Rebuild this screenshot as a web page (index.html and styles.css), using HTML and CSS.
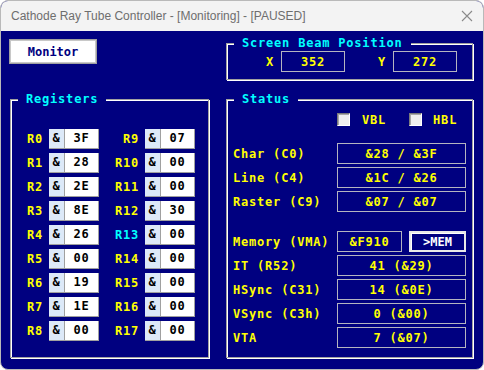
FILE: index.html
```html
<!DOCTYPE html>
<html lang="en">
<head>
    <meta charset="UTF-8">
    <title>Cathode Ray Tube Controller</title>
    <link rel="stylesheet" href="styles.css">
</head>
<body>
    <div class="window">
        <div class="titlebar">
            <span class="title">Cathode Ray Tube Controller - [Monitoring] - [PAUSED]</span>
            <svg class="close" width="12" height="12" viewBox="0 0 12 12">
                <path d="M1 1 L11 11 M11 1 L1 11" stroke="#8a8a8a" stroke-width="1.1" fill="none"/>
            </svg>
        </div>

        <div class="client">
            <button class="monitor">Monitor</button>

            <fieldset class="group beam">
                <legend>Screen Beam Position</legend>
                <div class="beam-row">
                    <span class="lbl">X</span>
                    <div class="box beam-box">352</div>
                    <span class="lbl y">Y</span>
                    <div class="box beam-box">272</div>
                </div>
            </fieldset>

            <fieldset class="group registers">
                <legend>Registers</legend>
                <div class="reg-grid">
                    <span class="reg">R0</span><span class="amp">&amp;</span><span class="val">3F</span>
                    <span class="reg">R9</span><span class="amp">&amp;</span><span class="val">07</span>
                    <span class="reg">R1</span><span class="amp">&amp;</span><span class="val">28</span>
                    <span class="reg">R10</span><span class="amp">&amp;</span><span class="val">00</span>
                    <span class="reg">R2</span><span class="amp">&amp;</span><span class="val">2E</span>
                    <span class="reg">R11</span><span class="amp">&amp;</span><span class="val">00</span>
                    <span class="reg">R3</span><span class="amp">&amp;</span><span class="val">8E</span>
                    <span class="reg">R12</span><span class="amp">&amp;</span><span class="val">30</span>
                    <span class="reg">R4</span><span class="amp">&amp;</span><span class="val">26</span>
                    <span class="reg hot">R13</span><span class="amp">&amp;</span><span class="val">00</span>
                    <span class="reg">R5</span><span class="amp">&amp;</span><span class="val">00</span>
                    <span class="reg">R14</span><span class="amp">&amp;</span><span class="val">00</span>
                    <span class="reg">R6</span><span class="amp">&amp;</span><span class="val">19</span>
                    <span class="reg">R15</span><span class="amp">&amp;</span><span class="val">00</span>
                    <span class="reg">R7</span><span class="amp">&amp;</span><span class="val">1E</span>
                    <span class="reg">R16</span><span class="amp">&amp;</span><span class="val">00</span>
                    <span class="reg">R8</span><span class="amp">&amp;</span><span class="val">00</span>
                    <span class="reg">R17</span><span class="amp">&amp;</span><span class="val">00</span>
                </div>
            </fieldset>

            <fieldset class="group status">
                <legend>Status</legend>
                <div class="checks">
                    <span class="check"></span><span class="lbl">VBL</span>
                    <span class="check hbl"></span><span class="lbl">HBL</span>
                </div>
                <div class="rows">
                    <div class="row"><span class="lbl">Char (C0)</span><div class="box wide">&amp;28 / &amp;3F</div></div>
                    <div class="row"><span class="lbl">Line (C4)</span><div class="box wide">&amp;1C / &amp;26</div></div>
                    <div class="row"><span class="lbl">Raster (C9)</span><div class="box wide">&amp;07 / &amp;07</div></div>
                    <div class="row mem">
                        <span class="lbl">Memory (VMA)</span>
                        <div class="box short">&amp;F910</div>
                        <button class="mem-btn">&gt;MEM</button>
                    </div>
                    <div class="row"><span class="lbl">IT (R52)</span><div class="box wide">41 (&amp;29)</div></div>
                    <div class="row"><span class="lbl">HSync (C31)</span><div class="box wide">14 (&amp;0E)</div></div>
                    <div class="row"><span class="lbl">VSync (C3h)</span><div class="box wide">0 (&amp;00)</div></div>
                    <div class="row"><span class="lbl">VTA</span><div class="box wide">7 (&amp;07)</div></div>
                </div>
            </fieldset>
        </div>
    </div>
</body>
</html>
```

FILE: styles.css
```css
body {
    margin: 0;
    background: #ffffff;
}

.window {
    width: 484px;
    height: 370px;
    box-sizing: border-box;
    border: 1px solid #b9b9b9;
    border-radius: 8px;
    overflow: hidden;
    background: #000080;
}

.titlebar {
    height: 30px;
    background: #f3f3f3;
    display: flex;
    align-items: center;
    justify-content: space-between;
    padding: 0 10px 0 10px;
}
.title {
    font-family: "Liberation Sans", Arial, sans-serif;
    font-size: 12px;
    color: #6e6e6e;
}
.close {
    display: block;
}

.client {
    display: grid;
    grid-template-columns: 201px 248px;
    grid-template-rows: 44px 266px;
    column-gap: 16px;
    row-gap: 12px;
    padding: 5px 0 0 8px;
    font-family: "DejaVu Sans Mono", "Liberation Mono", monospace;
    font-weight: bold;
    font-size: 12px;
    letter-spacing: 0.8px;
    color: #ffff00;
}

.monitor {
    margin-top: 3px;
    width: 88px;
    height: 25px;
    align-self: start;
    background: #ffffff;
    border: 1px solid #a0a0a0;
    box-shadow: inset 1px 1px 0 #c8c8c8, inset -1px -1px 0 #c8c8c8;
    font: inherit;
    color: #000080;
    padding: 0;
}

.group {
    margin: 0;
    padding: 0;
    min-width: 0;
    box-sizing: border-box;
    border: 1px solid #a0a0a0;
    box-shadow: inset 1px 1px 0 #ffffff, 1px 1px 0 #ffffff;
}
.group legend {
    margin-left: 7px;
    padding: 0 8px;
    line-height: 14px;
    background: #000080;
    color: #00ffff;
}

.beam {
    width: 247px;
    height: 44px;
}
.beam-row {
    display: flex;
    align-items: center;
    padding: 1px 0 0 39px;
}
.beam-row .lbl {
    width: 8px;
    margin-right: 7px;
}
.beam-row .y {
    margin-left: 33px;
}

.box {
    box-sizing: border-box;
    height: 21px;
    border: 1px solid #b4b4c0;
    display: flex;
    align-items: center;
    justify-content: center;
}
.beam-box {
    width: 64px;
}

.registers {
    margin-left: 1px;
    width: 199px;
    height: 266px;
}
.reg-grid {
    display: grid;
    grid-template-columns: 38px 16px 34px 46px 16px 34px;
    grid-auto-rows: 20px;
    row-gap: 4px;
    padding-top: 23px;
}
.reg {
    text-align: right;
    padding-right: 6px;
    line-height: 20px;
}
.reg.hot {
    color: #00ffff;
}
.amp, .val {
    box-sizing: border-box;
    border-right: 1px solid #a0a0a0;
    border-bottom: 1px solid #a0a0a0;
    color: #000000;
    text-align: center;
    line-height: 19px;
}
.amp {
    background: #dde9f8;
}
.val {
    background: #ffffff;
}

.status {
    width: 247px;
    height: 266px;
}
.checks {
    display: flex;
    align-items: center;
    height: 13px;
    margin-top: 7px;
    padding-left: 110px;
}
.check {
    box-sizing: border-box;
    width: 13px;
    height: 13px;
    background: #efefef;
    border: 1px solid;
    border-color: #7a7a7a #ffffff #ffffff #7a7a7a;
    box-shadow: inset 1px 1px 0 #a8a8a8;
    margin-right: 12px;
}
.check.hbl {
    margin-left: 23px;
    margin-right: 11px;
}

.rows {
    display: flex;
    flex-direction: column;
    gap: 3px;
    margin-top: 17px;
    padding-left: 6px;
}
.row {
    display: flex;
    align-items: center;
}
.row .lbl {
    width: 104px;
}
.row.mem {
    margin-top: 16px;
}
.wide {
    width: 129px;
}
.short {
    width: 65px;
}
.mem-btn {
    box-sizing: border-box;
    width: 57px;
    height: 21px;
    margin-left: 7px;
    padding: 0;
    background: #000080;
    border: 2px solid #e8e8e8;
    box-shadow: inset 1px 1px 0 #ffffff;
    font: inherit;
    color: #ffffff;
}
```
